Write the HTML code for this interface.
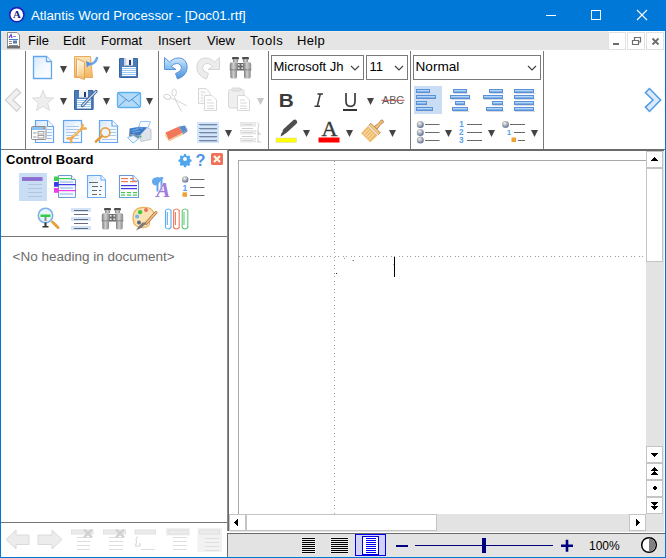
<!DOCTYPE html>
<html><head><meta charset="utf-8">
<style>
html,body{margin:0;padding:0}
body{width:666px;height:558px;overflow:hidden;position:relative;background:#fff;font-family:"Liberation Sans",sans-serif}
.a{position:absolute}
.t{position:absolute;white-space:pre;line-height:1}
</style></head><body>
<!-- title bar -->
<div class="a" style="left:0;top:0;width:666px;height:31px;background:#0078d7"></div>
<div class="a" style="left:0;top:0;width:1px;height:558px;background:#0078d7"></div>
<div class="a" style="left:665px;top:0;width:1px;height:558px;background:#0078d7"></div>
<div class="a" style="left:0;top:557px;width:666px;height:1px;background:#0078d7"></div>
<div class="t" style="left:31px;top:9px;font-size:13.25px;color:#fff">Atlantis Word Processor - [Doc01.rtf]</div>
<!-- menu bar -->
<div class="a" style="left:1px;top:31px;width:664px;height:19px;background:#e5e5e5"></div>
<div class="a" style="left:1px;top:31px;width:607px;height:1px;background:#f0eeec"></div>
<div class="a" style="left:608px;top:31px;width:57px;height:19px;background:#fff"></div>
<div class="a" style="left:608px;top:32px;width:16px;height:16px;border:1px solid #e2e2e2"></div>
<div class="a" style="left:627px;top:32px;width:16px;height:16px;border:1px solid #e2e2e2"></div>
<div class="a" style="left:646px;top:32px;width:16px;height:16px;border:1px solid #e2e2e2"></div>
<div class="t" style="left:28px;top:34px;font-size:13px;color:#000">File</div>
<div class="t" style="left:63px;top:34px;font-size:13px;color:#000">Edit</div>
<div class="t" style="left:101px;top:34px;font-size:13px;color:#000">Format</div>
<div class="t" style="left:158px;top:34px;font-size:13px;color:#000">Insert</div>
<div class="t" style="left:207px;top:34px;font-size:13px;color:#000">View</div>
<div class="t" style="left:250px;top:34px;font-size:13px;color:#000;letter-spacing:0.6px">Tools</div>
<div class="t" style="left:297px;top:34px;font-size:13px;color:#000;letter-spacing:0.3px">Help</div>
<!-- toolbar separators -->
<div class="a" style="left:25px;top:51px;width:1px;height:98px;background:#7a7a7a"></div>
<div class="a" style="left:158px;top:51px;width:1px;height:98px;background:#7a7a7a"></div>
<div class="a" style="left:268px;top:51px;width:1px;height:98px;background:#7a7a7a"></div>
<div class="a" style="left:410px;top:51px;width:1px;height:98px;background:#7a7a7a"></div>
<div class="a" style="left:543px;top:51px;width:1px;height:98px;background:#7a7a7a"></div>
<!-- combos -->
<div class="a" style="left:271px;top:55px;width:91px;height:23px;border:1px solid #7a7a7a;background:#fff"></div>
<div class="a" style="left:366px;top:55px;width:40px;height:23px;border:1px solid #7a7a7a;background:#fff"></div>
<div class="a" style="left:413px;top:55px;width:126px;height:23px;border:1px solid #7a7a7a;background:#fff"></div>
<div class="a" style="left:272px;top:56px;width:72px;height:23px;overflow:hidden"><div class="t" style="left:1.5px;top:4px;font-size:13px;color:#000">Microsoft JhengHei</div></div>
<div class="t" style="left:369.5px;top:60px;font-size:13px;color:#000">11</div>
<div class="t" style="left:415.5px;top:60px;font-size:13.6px;color:#000">Normal</div>
<!-- toolbar bottom line -->
<div class="a" style="left:1px;top:149px;width:664px;height:1px;background:#767676"></div>
<!-- left panel -->
<div class="t" style="left:6px;top:153px;font-size:13px;font-weight:bold;color:#000">Control Board</div>
<div class="a" style="left:1px;top:236px;width:226px;height:1px;background:#767676"></div>
<div class="t" style="left:12.5px;top:250px;font-size:13.5px;color:#6d6d6d">&lt;No heading in document&gt;</div>
<div class="a" style="left:1px;top:522px;width:226px;height:1px;background:#767676"></div>
<!-- doc frame -->
<div class="a" style="left:227px;top:149px;width:1px;height:382px;background:#8a8a8a"></div>
<div class="a" style="left:228px;top:150px;width:436px;height:1px;background:#6a6a6a"></div>
<div class="a" style="left:228px;top:149px;width:436px;height:1px;background:#6a6a6a"></div>
<div class="a" style="left:228px;top:149px;width:1px;height:382px;background:#6a6a6a"></div>
<!-- page -->
<div class="a" style="left:238px;top:160px;width:408px;height:1px;background:#a8a8a8"></div>
<div class="a" style="left:238px;top:160px;width:1px;height:354px;background:#a8a8a8"></div>
<!-- vertical scrollbar -->
<div class="a" style="left:646px;top:151px;width:18px;height:363px;background:#e3e3e3"></div>
<div class="a" style="left:646px;top:151px;width:15px;height:15px;border:1px solid #c4c4c4;background:#fff"></div>
<div class="a" style="left:646px;top:168px;width:15px;height:92px;border:1px solid #c4c4c4;background:#fff"></div>
<div class="a" style="left:646px;top:446px;width:15px;height:15px;border:1px solid #c4c4c4;background:#fff"></div>
<div class="a" style="left:646px;top:463px;width:15px;height:15px;border:1px solid #c4c4c4;background:#fff"></div>
<div class="a" style="left:646px;top:480px;width:15px;height:15px;border:1px solid #c4c4c4;background:#fff"></div>
<div class="a" style="left:646px;top:497px;width:15px;height:15px;border:1px solid #c4c4c4;background:#fff"></div>
<!-- horizontal scrollbar -->
<div class="a" style="left:229px;top:514px;width:435px;height:18px;background:#e3e3e3"></div>
<div class="a" style="left:229px;top:514px;width:15px;height:15px;border:1px solid #c4c4c4;background:#fff"></div>
<div class="a" style="left:246px;top:514px;width:189px;height:15px;border:1px solid #c4c4c4;background:#fff"></div>
<div class="a" style="left:629px;top:514px;width:15px;height:15px;border:1px solid #c4c4c4;background:#fff"></div>
<div class="a" style="left:227px;top:532px;width:438px;height:1px;background:#fff"></div>
<!-- status bar -->
<rect x="301" y="537" width="15" height="17" fill="#ececec"/><rect x="330" y="537" width="19" height="17" fill="#ececec"/>
<div class="a" style="left:227px;top:533px;width:438px;height:1px;background:#6a6a6a"></div>
<div class="a" style="left:227px;top:533px;width:1px;height:24px;background:#6a6a6a"></div>
<div class="a" style="left:228px;top:534px;width:437px;height:23px;background:#e3e3e3"></div>
<div class="t" style="left:589px;top:540px;font-size:12px;color:#000">100%</div>

<svg class="a" style="left:0;top:0" width="666" height="558" viewBox="0 0 666 558">
<defs>
<linearGradient id="gDoc" x1="0" y1="0" x2="1" y2="1"><stop offset="0" stop-color="#d6e7fa"/><stop offset="0.5" stop-color="#f2f8fe"/><stop offset="1" stop-color="#fff"/></linearGradient>
<linearGradient id="gBar" x1="0" y1="0" x2="0" y2="1"><stop offset="0" stop-color="#9cc4f0"/><stop offset="0.5" stop-color="#6fa2e2"/><stop offset="1" stop-color="#4f86d0"/></linearGradient>

</defs>
<!-- title icon -->
<circle cx="16.8" cy="14.7" r="7.1" fill="#fff" stroke="#1e22b8" stroke-width="1.6"/>
<text x="17" y="17.7" font-family="Liberation Serif" font-weight="bold" font-size="10.8" fill="#14247a" text-anchor="middle">A</text>
<!-- window controls -->
<rect x="546" y="15" width="10" height="1" fill="#fff"/>
<rect x="591.5" y="10.5" width="9" height="9" fill="none" stroke="#fff" stroke-width="1"/>
<path d="M637,10 L647,20 M647,10 L637,20" stroke="#fff" stroke-width="1.1"/>
<!-- menu doc icon -->
<path d="M7.5,32.5 H17 L19.5,35 V47.5 H7.5 Z" fill="#fff" stroke="#8c8c8c"/>
<rect x="7" y="46" width="13" height="2.5" fill="#707070"/>
<path d="M9,38 L11,34.5 L12,38" stroke="#5a4ad0" stroke-width="1.2" fill="none"/>
<rect x="13" y="36" width="3" height="1" fill="#9a7ad0"/>
<rect x="9" y="39" width="9" height="1" fill="#4a80c0"/>
<rect x="9" y="41" width="3" height="1" fill="#8a8a8a"/>
<rect x="9" y="43" width="3" height="1" fill="#8a8a8a"/>
<rect x="13" y="40.5" width="4" height="3" fill="#5a7ab0"/>
<rect x="9" y="45" width="9" height="1" fill="#8a8a8a"/>
<!-- mdi glyphs -->
<rect x="613" y="43" width="6" height="2" fill="#6d6d6d"/>
<path d="M632.5,40.5 h6 v4 h-6 z M634.5,40 v-2.5 h6 v4.5 h-2" fill="none" stroke="#6d6d6d" stroke-width="1.2"/>
<path d="M652.5,38.5 L658.5,44.5 M658.5,38.5 L652.5,44.5" stroke="#6d6d6d" stroke-width="1.8"/>
<!-- chevrons -->
<path d="M16.6,88.6 L20.6,92.8 L13,99.9 L20.6,107.1 L16.6,111.4 L5.4,99.9 Z" fill="#f0f0f0" stroke="#d2d2d2" stroke-width="1.3"/>
<path d="M649.5,88.6 L645.4,92.8 L653,100 L645.4,107.1 L649.5,111.4 L660.6,100 Z" fill="#dbeafb" stroke="#4d9be6" stroke-width="1.5"/>
<!-- dropdowns -->
<g fill="#444">
<path d="M60,66h7l-3.5,7z"/>
<path d="M103,66.5h7l-3.5,7z"/>
<path d="M60,98h7l-3.5,7z"/>
<path d="M103,98h7l-3.5,7z"/>
<path d="M146,98h7l-3.5,7z"/>
<path d="M225,130h7l-3.5,7z"/>
<path d="M367,98h7l-3.5,7z"/>
<path d="M303,130h7l-3.5,7z"/>
<path d="M346,130h7l-3.5,7z"/>
<path d="M389,130h7l-3.5,7z"/>
<path d="M445,130h7l-3.5,7z"/>
<path d="M488,130h7l-3.5,7z"/>
<path d="M531,130h7l-3.5,7z"/>
</g>
<path d="M257,98h7l-3.5,7z" fill="#c8c8c8"/>
<!-- combo chevrons -->
<path d="M351,66 l4,4 l4,-4 M395,66 l4,4 l4,-4 M528,66 l4,4 l4,-4" fill="none" stroke="#444" stroke-width="1.2"/>

<!-- G1 row1 -->
<path d="M33.5,56.5 H46.5 L51.5,61.5 V78.5 H33.5 Z" fill="url(#gDoc)" stroke="#64a6ee" stroke-width="1.3"/>
<path d="M46.5,56.5 V61.5 H51.5" fill="#fff" stroke="#64a6ee" stroke-width="1.3"/>
<defs>
<linearGradient id="gFold" x1="0" y1="0" x2="0" y2="1"><stop offset="0" stop-color="#fbe4b8"/><stop offset="1" stop-color="#f2b45e"/></linearGradient>
<linearGradient id="gDoor" x1="0" y1="0" x2="0" y2="1"><stop offset="0" stop-color="#fff8ea"/><stop offset="0.5" stop-color="#fbe0b0"/><stop offset="1" stop-color="#f3b868"/></linearGradient>
</defs>
<path d="M74.5,56.5 H90.5 L91.5,67 L92.5,77.5 H74.5 Z" fill="url(#gFold)" stroke="#ebaa5a" stroke-width="1"/>
<path d="M76.5,58.5 L84.5,62 V79.5 L76.5,76.5 Z" fill="url(#gDoor)" stroke="#e9a652" stroke-width="1"/>
<path d="M77.8,60.5 V75.5" stroke="#fffaf0" stroke-width="1"/>
<path d="M97.2,57 Q96,63.5 89.5,64.5" stroke="#6aa8ea" stroke-width="2.4" fill="none"/>
<path d="M86,61 L86.8,67.5 L91.5,63.5 Z" fill="#5494de"/>
<rect x="119" y="58" width="19" height="20" rx="1" fill="#4a7cbc"/>
<rect x="119.5" y="58.5" width="18" height="19" rx="1" fill="none" stroke="#3a64a0"/>
<rect x="124" y="58" width="9" height="7.5" fill="#f2f2f2"/>
<rect x="124" y="58" width="2" height="7.5" fill="#c8d4e4"/>
<rect x="129" y="60" width="2" height="5" fill="#26367a"/>
<rect x="122" y="67" width="14" height="9" fill="#fff"/>
<g fill="#9ccaf2"><rect x="122" y="68" width="14" height="1"/><rect x="122" y="70" width="14" height="1"/><rect x="122" y="72" width="14" height="1"/><rect x="122" y="74" width="14" height="1"/></g>
<!-- G1 row2 -->
<polygon points="43.0,90.2 45.8,97.6 53.7,98.0 47.6,103.0 49.6,110.6 43.0,106.3 36.4,110.6 38.4,103.0 32.3,98.0 40.2,97.6" fill="#eeeeee" stroke="#dcdcdc" stroke-width="1"/>
<rect x="74" y="90" width="19.5" height="20" rx="1" fill="#4a7cbc"/>
<rect x="74.5" y="90.5" width="18.5" height="19" rx="1" fill="none" stroke="#3a64a0"/>
<rect x="79" y="90" width="9" height="7.5" fill="#f2f2f2"/>
<rect x="84" y="92" width="2" height="5" fill="#26367a"/>
<rect x="77" y="99" width="14" height="9.5" fill="#fff"/>
<g fill="#9ccaf2"><rect x="77" y="100" width="14" height="1"/><rect x="77" y="102" width="14" height="1"/><rect x="77" y="104" width="14" height="1"/><rect x="77" y="106" width="14" height="1"/></g>
<path d="M82.5,105.5 L96,91.5" stroke="#3d5a8a" stroke-width="3.2" stroke-linecap="round"/>
<path d="M82.5,105.5 L96,91.5" stroke="#c8dcf0" stroke-width="1.4" stroke-linecap="round"/>
<rect x="117.5" y="92.5" width="23" height="15" rx="1.5" fill="#b2dbfa" stroke="#5ab0f0" stroke-width="1.3"/>
<path d="M118.5,93.5 L129,101.5 L139.5,93.5 M118.5,106.5 L126,99.5 M139.5,106.5 L132,99.5" stroke="#4d8fd6" stroke-width="1" fill="none"/>
<!-- G1 row3 -->
<path d="M35.5,120.5 H47.5 L53.5,126.5 V142.5 H35.5 Z" fill="url(#gDoc)" stroke="#64a6ee" stroke-width="1.2"/>
<path d="M47.5,120.5 V126.5 H53.5" fill="#fff" stroke="#64a6ee" stroke-width="1.2"/>
<g fill="#9cc4ec"><rect x="47" y="129" width="5" height="1"/><rect x="47" y="132" width="5" height="1"/><rect x="47" y="135" width="5" height="1"/><rect x="47" y="138" width="5" height="1"/></g>
<rect x="31.5" y="126.5" width="14.5" height="13" rx="1" fill="#fff" stroke="#8c8c8c"/>
<rect x="32" y="127" width="13.5" height="3" fill="#8cc2f2"/>
<rect x="43.5" y="127.5" width="1.5" height="1.5" fill="#e07050"/>
<rect x="38" y="131.5" width="6" height="2.5" fill="none" stroke="#8c8c8c" stroke-width="0.8"/>
<rect x="38" y="135.5" width="6" height="2.5" fill="none" stroke="#8c8c8c" stroke-width="0.8"/>
<rect x="33" y="132.5" width="3.5" height="1" fill="#9a9a9a"/><rect x="33" y="136.5" width="3.5" height="1" fill="#9a9a9a"/>
<rect x="63.5" y="120.5" width="18" height="22" fill="url(#gDoc)" stroke="#64a6ee" stroke-width="1.2"/>
<g fill="#a8c8ec"><rect x="66" y="126" width="13" height="1"/><rect x="66" y="129" width="13" height="1"/><rect x="66" y="132" width="13" height="1"/><rect x="66" y="135" width="13" height="1"/><rect x="66" y="138" width="13" height="1"/></g>
<g stroke="#eeab52" stroke-width="2.5" stroke-linecap="round" fill="none">
<path d="M71,138.5 L82,128.5"/>
<path d="M82,128.5 L82.5,124.8 M82,128.5 L85.7,128.6"/>
<path d="M71,138.5 L67.8,138.4 M71,138.5 L71.3,142"/>
</g>
<path d="M73,136 L80,130" stroke="#fbe0a8" stroke-width="0.8"/>
<path d="M99.5,120.5 H112 L117.5,126 V142.5 H99.5 Z" fill="url(#gDoc)" stroke="#64a6ee" stroke-width="1.2"/>
<path d="M112,120.5 V126 H117.5" fill="#fff" stroke="#64a6ee" stroke-width="1.2"/>
<g fill="#a8c8ec"><rect x="109" y="129" width="7" height="1"/><rect x="109" y="132" width="7" height="1"/><rect x="109" y="135" width="7" height="1"/><rect x="102" y="139" width="14" height="1"/></g>
<circle cx="105.3" cy="132.5" r="4.6" fill="#eef4fb" fill-opacity="0.7" stroke="#e8a040" stroke-width="1.6"/>
<path d="M102,136 L96,141.5" stroke="#e39a3a" stroke-width="2.6" stroke-linecap="round"/>
<path d="M140.5,121.5 H150.5 L148,127.5 H138.5 Z" fill="#f8fbff" stroke="#8cc4f4" stroke-width="0.9"/>
<path d="M147,127.5 L151,129.5 V139.5 L141,141.5 L139.5,135.5 Z" fill="#dfe4ec" stroke="#b4bcc8" stroke-width="0.8"/>
<path d="M129.5,128.5 L139,126.8 L147,127.5 L139.5,135.5 L130,134 Z" fill="#3d7bc8"/>
<path d="M131.5,130.5 L138,129 M132.5,132.5 L140,131 M136,128 L143,128" stroke="#7cb2ec" stroke-width="0.9"/>
<path d="M129,128.8 V136.5 L139.5,138.5 V135.5 L130,134 Z" fill="#7a8aa4"/>
<path d="M127.5,137.5 L133.5,135.5 L138.5,139 L133,143 Z" fill="#f2f8fe" stroke="#78b8f2" stroke-width="0.9"/>
<rect x="140" y="135.5" width="1.5" height="2" fill="#38c060"/>
<!-- G2 row1 -->
<defs>
<linearGradient id="gUndo" x1="0" y1="0" x2="0" y2="1"><stop offset="0" stop-color="#d4eafc"/><stop offset="0.45" stop-color="#8cc2f0"/><stop offset="1" stop-color="#4f8fd8"/></linearGradient>
<linearGradient id="gBino" x1="0" y1="0" x2="1" y2="0"><stop offset="0" stop-color="#7c7c7c"/><stop offset="0.45" stop-color="#cfcfcf"/><stop offset="1" stop-color="#8a8a8a"/></linearGradient>
</defs>
<path d="M164.5,57.5 L169.5,62 Q175,56.5 182,58.5 Q188,61.5 187,69 Q186,76 177.5,79 L175.5,73.5 Q181.5,71.5 181.5,68 Q181,63.5 176.5,63.5 Q173.5,63.5 171.5,66.5 L176,69.5 H164.5 Z" fill="url(#gUndo)" stroke="#5a94d8" stroke-width="1"/>
<path d="M 219.5 57.5 L 214.5 62 Q 209 56.5 202 58.5 Q 196 61.5 197 69 Q 198 76 206.5 79 L 208.5 73.5 Q 202.5 71.5 202.5 68 Q 203 63.5 207.5 63.5 Q 210.5 63.5 212.5 66.5 L 208 69.5 H 219.5 Z" fill="#ececec" stroke="#d6d6d6" stroke-width="1"/>
<g>
<rect x="232" y="57" width="7" height="2.4" rx="1" fill="#4e4e4e"/>
<rect x="233" y="59.3" width="5" height="3" fill="url(#gBino)"/>
<path d="M229.8,64 Q229.8,62.2 231.8,62.2 H235.8 Q237.6,62.2 237.6,64 V70 H229.8 Z" fill="url(#gBino)"/>
<rect x="229.8" y="69.6" width="7.8" height="1" fill="#5e5e5e"/>
<path d="M230.3,70.6 H237 V76.8 Q237,78.4 235.4,78.4 H231.9 Q230.3,78.4 230.3,76.8 Z" fill="url(#gBino)"/>
<rect x="242" y="57" width="7" height="2.4" rx="1" fill="#4e4e4e"/>
<rect x="243" y="59.3" width="5" height="3" fill="url(#gBino)"/>
<path d="M 251.2 64 Q 251.2 62.2 249.2 62.2 H 245.2 Q 243.4 62.2 243.4 64 V 70 H 251.2 Z" fill="url(#gBino)"/>
<rect x="243.4" y="69.6" width="7.8" height="1" fill="#5e5e5e"/>
<path d="M 250.7 70.6 H 244 V 76.8 Q 244 78.4 245.6 78.4 H 249.1 Q 250.7 78.4 250.7 76.8 Z" fill="url(#gBino)"/>
<rect x="237.3" y="63" width="6.4" height="7.5" fill="#6a6a6a"/>
<g fill="#e8e8e8"><rect x="238" y="64" width="1.6" height="1.6"/><rect x="241.4" y="64" width="1.6" height="1.6"/><rect x="238" y="67.4" width="1.6" height="1.6"/><rect x="241.4" y="67.4" width="1.6" height="1.6"/></g>
</g>
<!-- G2 row2 disabled -->
<g fill="none" stroke="#d6d6d6" stroke-width="1">
<ellipse cx="174.2" cy="92.6" rx="2.2" ry="3.6"/>
<ellipse cx="167.3" cy="96.8" rx="3.4" ry="2.3" transform="rotate(20 167.3 96.8)"/>
<path d="M174.5,96.5 L176,101 L181.5,111.5 M170.5,98 L176,100 L187,106"/>
</g>
<g stroke="#d8d8d8" stroke-width="1">
<path d="M198.5,88.5 H206 L210,92.5 V103.5 H198.5 Z" fill="#fafafa"/>
<path d="M204.5,95.5 H212 L216.5,100 V110.5 H204.5 Z" fill="#fff"/>
<path d="M201,92 h4 M201,95 h2 M201,98 h2 M201,101 h2 M207,100 h5 M207,103 h7 M207,106 h7 M207,108.5 h7" fill="none"/>
<rect x="228.5" y="89.5" width="15.5" height="18.5" rx="2" fill="#efefef"/>
<rect x="232" y="88" width="9" height="3" rx="1" fill="#e4e4e4"/>
<path d="M237.5,95.5 H245 L249.5,100 V110.5 H237.5 Z" fill="#fff"/>
<path d="M240,100 h5 M240,103 h7 M240,106 h7 M240,108.5 h7" fill="none"/>
</g>
<!-- G2 row3 -->
<path d="M165.5,132.5 L179,126.5 L182.5,133 L168.5,140 Z" fill="#f2775a"/>
<path d="M165.5,132.5 L168.5,140 L169,141.5 L165,135.5 Z" fill="#f4d49a"/>
<path d="M168.5,140 L182.5,133 L183,134.5 L169,141.5 Z" fill="#f0c890"/>
<path d="M179,126.5 L185,125.5 L187.5,130 L182.5,133 Z" fill="#5a8cd0"/>
<path d="M182.5,133 L187.5,130 L187.5,131.5 L183,134.5 Z" fill="#7a8aa8"/>
<rect x="197" y="122" width="22" height="21" fill="#d0e4fa"/>
<g fill="#7886a6"><rect x="199" y="124" width="18" height="1"/><rect x="199" y="128" width="18" height="1"/><rect x="199" y="132" width="18" height="1"/><rect x="199" y="136" width="18" height="1"/><rect x="199" y="140" width="18" height="1"/></g><g fill="#b4c4dc"><rect x="200" y="125" width="17" height="1"/><rect x="200" y="129" width="17" height="1"/><rect x="200" y="133" width="17" height="1"/><rect x="200" y="137" width="17" height="1"/><rect x="200" y="141" width="17" height="1"/></g>
<g fill="#efefef" stroke="#e2e2e2" stroke-width="0.8"><rect x="240.4" y="122.4" width="15" height="3.6"/><rect x="240.4" y="130.4" width="15" height="3.6"/><rect x="240.4" y="138.4" width="15" height="3.6"/></g>
<g fill="#cfcfcf"><rect x="242" y="124" width="11" height="0.8"/><rect x="242" y="128" width="11" height="1"/><rect x="242" y="132" width="11" height="0.8"/><rect x="242" y="136" width="11" height="1"/><rect x="242" y="140" width="11" height="0.8"/></g>
<path d="M257,122.5 Q260,124 258,128 V134 M257,130.5 Q260,132 258,136 V142 M257,134 h4 M257,142 h4" fill="none" stroke="#cfcfcf" stroke-width="1"/>

<!-- G3 -->
<text x="278.8" y="106.8" font-family="Liberation Sans" font-weight="bold" font-size="19" fill="#3c3c3c" textLength="15" lengthAdjust="spacingAndGlyphs">B</text>
<path d="M317.5,94 H323 M314.5,106.2 H320 M320.3,94 L317.3,106.2" fill="none" stroke="#3a3a3a" stroke-width="1.5"/>
<path d="M346,93 V101.5 Q346,106.3 350.5,106.3 Q355,106.3 355,101.5 V93" fill="none" stroke="#3c3c3c" stroke-width="1.7"/>
<rect x="343" y="109" width="14" height="2" fill="#333"/>
<text x="382" y="104" font-family="Liberation Sans" font-size="11" fill="#5a5a5a" textLength="22" lengthAdjust="spacingAndGlyphs">ABC</text>
<rect x="381.5" y="99.8" width="23" height="1" fill="#c0504a"/>
<rect x="276" y="138" width="20.5" height="4.5" fill="#ffff00" stroke="#d8d8c8" stroke-width="0.6"/>
<path d="M285,131 L294.8,122" stroke="#4e4e4e" stroke-width="4.8" stroke-linecap="round"/>
<path d="M280.5,136.5 L281.5,133 L283.5,131 L285.5,133 L283.5,135 Z" fill="#4e4e4e"/>
<text x="321.5" y="136" font-family="Liberation Serif" font-size="20" fill="#3a3a3a" stroke="#3a3a3a" stroke-width="0.35" textLength="16" lengthAdjust="spacingAndGlyphs">A</text>
<rect x="318.5" y="137.5" width="21" height="5" fill="#ff0000"/>
<g transform="translate(383,120.5) rotate(45)">
<path d="M-1.7,0.8 Q0,-0.8 1.7,0.8 L1.1,4.5 L2,10.5 H-2 L-1.1,4.5 Z" fill="#efbe76" stroke="#b07440" stroke-width="0.7"/>
<rect x="-6.7" y="10.5" width="13.4" height="3" fill="#f2c67e" stroke="#b07440" stroke-width="0.7"/>
<rect x="-6.7" y="13.4" width="13.4" height="1.1" fill="#e6ecf2"/>
<path d="M-6.7,14.5 H6.7 L6.4,24.5 H-6.4 Z" fill="#edb965"/>
<g fill="#f9dfae"><rect x="-4.5" y="15.5" width="1" height="8"/><rect x="-2" y="15.5" width="1" height="8"/><rect x="0.5" y="15.5" width="1" height="8"/><rect x="3" y="15.5" width="1" height="8"/></g>
</g>
<!-- G4 -->
<rect x="414" y="86" width="28" height="28" fill="#c9ddf5"/><rect x="417" y="93" width="14" height="1" fill="#d6dae2"/><rect x="416" y="89" width="14" height="4" fill="#5a90d8"/><rect x="417" y="90" width="12" height="1" fill="#b4d6f8"/><rect x="417" y="91" width="12" height="1" fill="#7eb0ea"/><rect x="417" y="99" width="20" height="1" fill="#d6dae2"/><rect x="416" y="95" width="20" height="4" fill="#5a90d8"/><rect x="417" y="96" width="18" height="1" fill="#b4d6f8"/><rect x="417" y="97" width="18" height="1" fill="#7eb0ea"/><rect x="417" y="105" width="11" height="1" fill="#d6dae2"/><rect x="416" y="101" width="11" height="4" fill="#5a90d8"/><rect x="417" y="102" width="9" height="1" fill="#b4d6f8"/><rect x="417" y="103" width="9" height="1" fill="#7eb0ea"/><rect x="417" y="111" width="17" height="1" fill="#d6dae2"/><rect x="416" y="107" width="17" height="4" fill="#5a90d8"/><rect x="417" y="108" width="15" height="1" fill="#b4d6f8"/><rect x="417" y="109" width="15" height="1" fill="#7eb0ea"/><rect x="454" y="93" width="14" height="1" fill="#d6dae2"/><rect x="453" y="89" width="14" height="4" fill="#5a90d8"/><rect x="454" y="90" width="12" height="1" fill="#b4d6f8"/><rect x="454" y="91" width="12" height="1" fill="#7eb0ea"/><rect x="451" y="99" width="20" height="1" fill="#d6dae2"/><rect x="450" y="95" width="20" height="4" fill="#5a90d8"/><rect x="451" y="96" width="18" height="1" fill="#b4d6f8"/><rect x="451" y="97" width="18" height="1" fill="#7eb0ea"/><rect x="456" y="105" width="10" height="1" fill="#d6dae2"/><rect x="455" y="101" width="10" height="4" fill="#5a90d8"/><rect x="456" y="102" width="8" height="1" fill="#b4d6f8"/><rect x="456" y="103" width="8" height="1" fill="#7eb0ea"/><rect x="453" y="111" width="16" height="1" fill="#d6dae2"/><rect x="452" y="107" width="16" height="4" fill="#5a90d8"/><rect x="453" y="108" width="14" height="1" fill="#b4d6f8"/><rect x="453" y="109" width="14" height="1" fill="#7eb0ea"/><rect x="490" y="93" width="14" height="1" fill="#d6dae2"/><rect x="489" y="89" width="14" height="4" fill="#5a90d8"/><rect x="490" y="90" width="12" height="1" fill="#b4d6f8"/><rect x="490" y="91" width="12" height="1" fill="#7eb0ea"/><rect x="484" y="99" width="20" height="1" fill="#d6dae2"/><rect x="483" y="95" width="20" height="4" fill="#5a90d8"/><rect x="484" y="96" width="18" height="1" fill="#b4d6f8"/><rect x="484" y="97" width="18" height="1" fill="#7eb0ea"/><rect x="493" y="105" width="11" height="1" fill="#d6dae2"/><rect x="492" y="101" width="11" height="4" fill="#5a90d8"/><rect x="493" y="102" width="9" height="1" fill="#b4d6f8"/><rect x="493" y="103" width="9" height="1" fill="#7eb0ea"/><rect x="487" y="111" width="17" height="1" fill="#d6dae2"/><rect x="486" y="107" width="17" height="4" fill="#5a90d8"/><rect x="487" y="108" width="15" height="1" fill="#b4d6f8"/><rect x="487" y="109" width="15" height="1" fill="#7eb0ea"/><rect x="515" y="93" width="20" height="1" fill="#d6dae2"/><rect x="514" y="89" width="20" height="4" fill="#5a90d8"/><rect x="515" y="90" width="18" height="1" fill="#b4d6f8"/><rect x="515" y="91" width="18" height="1" fill="#7eb0ea"/><rect x="515" y="99" width="20" height="1" fill="#d6dae2"/><rect x="514" y="95" width="20" height="4" fill="#5a90d8"/><rect x="515" y="96" width="18" height="1" fill="#b4d6f8"/><rect x="515" y="97" width="18" height="1" fill="#7eb0ea"/><rect x="515" y="105" width="20" height="1" fill="#d6dae2"/><rect x="514" y="101" width="20" height="4" fill="#5a90d8"/><rect x="515" y="102" width="18" height="1" fill="#b4d6f8"/><rect x="515" y="103" width="18" height="1" fill="#7eb0ea"/><rect x="515" y="111" width="20" height="1" fill="#d6dae2"/><rect x="514" y="107" width="20" height="4" fill="#5a90d8"/><rect x="515" y="108" width="18" height="1" fill="#b4d6f8"/><rect x="515" y="109" width="18" height="1" fill="#7eb0ea"/>
<defs><radialGradient id="gBall" cx="0.4" cy="0.35" r="0.7"><stop offset="0" stop-color="#f6f6f6"/><stop offset="0.55" stop-color="#a4a6ac"/><stop offset="1" stop-color="#4a6a9a"/></radialGradient></defs>
<g fill="url(#gBall)"><circle cx="420.3" cy="124.5" r="3.5"/><circle cx="420.3" cy="132.4" r="3.5"/><circle cx="420.3" cy="140.1" r="3.5"/></g>
<g fill="#6a6a6a"><rect x="425" y="124" width="14.5" height="1"/><rect x="425" y="132" width="14.5" height="1"/><rect x="425" y="140" width="14.5" height="1"/></g>
<g font-family="Liberation Sans" font-size="8.2" font-weight="bold" fill="#5aa2ea"><text x="459.3" y="127">1</text><text x="459" y="135">2</text><text x="459" y="143">3</text></g>
<g fill="#6a6a6a"><rect x="467" y="124" width="15" height="1"/><rect x="467" y="132" width="15" height="1"/><rect x="467" y="140" width="15" height="1"/></g>
<circle cx="505.5" cy="124.4" r="3.4" fill="url(#gBall)"/>
<text x="506.8" y="135" font-family="Liberation Sans" font-size="8" font-weight="bold" fill="#5aa2ea">1</text>
<rect x="511.5" y="137.5" width="4.5" height="4.5" fill="#f0a030"/>
<g fill="#6a6a6a"><rect x="510" y="124" width="15" height="1"/><rect x="514" y="132" width="11" height="1"/><rect x="518" y="140" width="7" height="1"/></g>

<!-- control board header icons -->
<g transform="translate(185,159) scale(0.82)">
<path d="M-1.2,-6 h2.4 l0.4,1.8 l1.6,0.7 l1.6,-1 l1.7,1.7 l-1,1.6 l0.7,1.6 l1.8,0.4 v2.4 l-1.8,0.4 l-0.7,1.6 l1,1.6 l-1.7,1.7 l-1.6,-1 l-1.6,0.7 l-0.4,1.8 h-2.4 l-0.4,-1.8 l-1.6,-0.7 l-1.6,1 l-1.7,-1.7 l1,-1.6 l-0.7,-1.6 l-1.8,-0.4 v-2.4 l1.8,-0.4 l0.7,-1.6 l-1,-1.6 l1.7,-1.7 l1.6,1 l1.6,-0.7 z" fill="#4da6ee"/>
<circle cx="0" cy="0" r="2.4" fill="#fff"/>
</g>
<text x="195.5" y="165.5" font-family="Liberation Sans" font-weight="bold" font-size="16" fill="#4d94e4" textLength="10" lengthAdjust="spacingAndGlyphs">?</text>
<rect x="211" y="153" width="12" height="12" rx="1.5" fill="#f0705a"/>
<path d="M214,156 L220,162 M220,156 L214,162" stroke="#fff8e0" stroke-width="2.2"/>
<!-- CB row1 -->
<rect x="19" y="173" width="28" height="28" fill="#c9ddf5"/>
<rect x="22" y="177" width="20.5" height="4" fill="#9a72d0"/>
<rect x="22" y="178.5" width="20.5" height="1" fill="#5a6ad8" opacity="0.6"/>
<g fill="#b4c4dc"><rect x="28" y="184" width="14" height="1"/><rect x="28" y="188" width="14" height="1"/><rect x="28" y="192" width="14" height="1"/><rect x="28" y="196" width="14" height="1"/></g>
<path d="M58.5,175.5 H71.5 L75.5,179.5 V197.5 H58.5 Z" fill="#f2f8fe" stroke="#6a9ad8" stroke-width="1"/>
<path d="M71.5,175.5 V179.5 H75.5" fill="#fff" stroke="#6a9ad8" stroke-width="1"/>
<rect x="54" y="176.5" width="4.5" height="4.5" fill="#40d050"/><rect x="58" y="178" width="14" height="1.2" fill="#40d050"/>
<rect x="54" y="182" width="4.5" height="4.8" fill="#3a3ae8"/><rect x="58" y="184" width="18" height="1.2" fill="#3a3ae8"/>
<rect x="54" y="188" width="4.5" height="4.8" fill="#f040e0"/><rect x="58" y="190" width="18" height="1.2" fill="#f040e0"/>
<g fill="#8ab0dc"><rect x="60" y="181.5" width="13" height="1"/><rect x="60" y="187.5" width="13" height="1"/><rect x="60" y="193.5" width="13" height="1"/></g>
<path d="M87.5,175.5 H101 L105.5,180 V197.5 H87.5 Z" fill="url(#gDoc)" stroke="#6aaaf0" stroke-width="1.1"/>
<path d="M101,175.5 V180 H105.5" fill="#fff" stroke="#6aaaf0" stroke-width="1.1"/>
<g fill="#6a6a6a"><rect x="89" y="182" width="9" height="1"/><rect x="92" y="186" width="6" height="1"/><rect x="100" y="186" width="2" height="1"/><rect x="92" y="190" width="5" height="1"/><rect x="99" y="190" width="2" height="1"/><rect x="92" y="194" width="5" height="1"/><rect x="99" y="194" width="2" height="1"/></g>
<path d="M119.5,175.5 H133 L138.5,181 V197.5 H119.5 Z" fill="#fff" stroke="#6a9ad8" stroke-width="1.1"/>
<path d="M133,175.5 V181 H138.5" fill="#fff" stroke="#6a9ad8" stroke-width="1.1"/>
<g fill="#f07a5a"><rect x="121" y="178" width="7" height="1.2"/><rect x="130" y="178" width="4" height="1.2"/><rect x="121" y="181" width="7" height="1.2"/><rect x="130" y="181" width="7" height="1.2"/></g>
<g fill="#3a3ae0"><rect x="121" y="185" width="16" height="1.2"/><rect x="121" y="188" width="16" height="1.2"/></g>
<g fill="#40c850"><rect x="121" y="192" width="4" height="1.2"/><rect x="127" y="192" width="4" height="1.2"/><rect x="133" y="192" width="4" height="1.2"/><rect x="121" y="194.5" width="4" height="1.2"/><rect x="127" y="194.5" width="4" height="1.2"/><rect x="133" y="194.5" width="4" height="1.2"/></g>
<path d="M164,177.5 H156.5 Q152,177.5 152,181.5 Q152,185.5 156.5,185.5 Z" fill="#64a8ec"/>
<rect x="156.5" y="177" width="2" height="14.5" fill="#64a8ec"/>
<rect x="160.5" y="177" width="2" height="14.5" fill="#64a8ec"/>
<text x="156.3" y="196.5" font-family="Liberation Serif" font-style="italic" font-weight="bold" font-size="21" fill="#a27cda" stroke="#fff" stroke-width="0.6" paint-order="stroke">A</text>
<circle cx="185.2" cy="179.4" r="3.2" fill="url(#gBall)"/>
<text x="182.6" y="190.6" font-family="Liberation Sans" font-size="8.5" font-weight="bold" fill="#5aa2ea">1</text>
<rect x="182.5" y="192.3" width="4.5" height="4.5" fill="#f0a030"/>
<g fill="#6a6a6a"><rect x="190" y="179" width="14.5" height="1"/><rect x="190" y="187" width="14.5" height="1"/><rect x="190" y="195" width="14.5" height="1"/></g>
<!-- CB row2 -->
<circle cx="45.5" cy="215.5" r="7.2" fill="#eaf4fd" stroke="#7ab2ea" stroke-width="1.6"/>
<rect x="40.5" y="214.5" width="10" height="2.5" fill="#30d040"/>
<rect x="44.5" y="217" width="2" height="4" fill="#8a8a8a"/>
<rect x="44.5" y="222.5" width="2" height="4" fill="#333"/>
<rect x="42.5" y="226" width="6" height="1.5" fill="#333"/>
<path d="M52.5,222 L58,227.5" stroke="#e8a040" stroke-width="3" stroke-linecap="round"/>
<g fill="#d2e4f8"><rect x="71" y="208" width="20" height="4"/><rect x="71" y="217" width="20" height="4"/><rect x="71" y="226" width="20" height="4"/></g>
<g fill="#6a6a7a"><rect x="74" y="210" width="14" height="1"/><rect x="74" y="214" width="14" height="1"/><rect x="74" y="219" width="14" height="1"/><rect x="74" y="223" width="14" height="1"/><rect x="74" y="228" width="14" height="1"/></g>
<g transform="translate(-128,151)"><g>
<rect x="232" y="57" width="7" height="2.4" rx="1" fill="#4e4e4e"/>
<rect x="233" y="59.3" width="5" height="3" fill="url(#gBino)"/>
<path d="M229.8,64 Q229.8,62.2 231.8,62.2 H235.8 Q237.6,62.2 237.6,64 V70 H229.8 Z" fill="url(#gBino)"/>
<rect x="229.8" y="69.6" width="7.8" height="1" fill="#5e5e5e"/>
<path d="M230.3,70.6 H237 V76.8 Q237,78.4 235.4,78.4 H231.9 Q230.3,78.4 230.3,76.8 Z" fill="url(#gBino)"/>
<rect x="242" y="57" width="7" height="2.4" rx="1" fill="#4e4e4e"/>
<rect x="243" y="59.3" width="5" height="3" fill="url(#gBino)"/>
<path d="M 251.2 64 Q 251.2 62.2 249.2 62.2 H 245.2 Q 243.4 62.2 243.4 64 V 70 H 251.2 Z" fill="url(#gBino)"/>
<rect x="243.4" y="69.6" width="7.8" height="1" fill="#5e5e5e"/>
<path d="M 250.7 70.6 H 244 V 76.8 Q 244 78.4 245.6 78.4 H 249.1 Q 250.7 78.4 250.7 76.8 Z" fill="url(#gBino)"/>
<rect x="237.3" y="63" width="6.4" height="7.5" fill="#6a6a6a"/>
<g fill="#e8e8e8"><rect x="238" y="64" width="1.6" height="1.6"/><rect x="241.4" y="64" width="1.6" height="1.6"/><rect x="238" y="67.4" width="1.6" height="1.6"/><rect x="241.4" y="67.4" width="1.6" height="1.6"/></g>
</g></g>
<path d="M143.5,207.3 Q152,207 153.8,213 Q154,216 151.5,217 Q148.5,218 149.5,222 Q150.5,227 143,227.5 Q133,228 133,218 Q133,207.5 143.5,207.3 Z" fill="#f9e2b4" stroke="#eeb25e" stroke-width="1.3"/>
<circle cx="140.1" cy="212.1" r="2.2" fill="#38c838"/>
<circle cx="146" cy="210" r="2" fill="#f07060"/>
<circle cx="137.1" cy="216.6" r="2" fill="#70b4f0"/>
<circle cx="139" cy="222.5" r="2" fill="#606878"/>
<path d="M156,212.5 L146,223.5" stroke="#a86a40" stroke-width="3" stroke-linecap="round"/>
<path d="M156,212.5 L146,223.5" stroke="#f0c078" stroke-width="1.8" stroke-linecap="round"/>
<path d="M147,222.5 L144.5,225 Q141,229 136,230.5 Q138,226.5 142.5,222.5 Z" fill="#7a7a7a"/>
<g fill="none" stroke-width="1.1">
<path d="M165.5,210.5 Q168.2,207.5 171,210.5 V227.5 Q168.2,230.5 165.5,227.5 Z M167.3,212 V225" stroke="#5ab0f0"/>
<path d="M173.6,210.5 Q176.4,207.5 179.2,210.5 V227.5 Q176.4,230.5 173.6,227.5 Z M175.4,212 V225" stroke="#f07a5a"/>
<path d="M182.2,210.5 Q185,207.5 187.8,210.5 V227.5 Q185,230.5 182.2,227.5 Z M184,212 V225" stroke="#60c878"/>
</g>
<!-- bottom panel disabled icons -->
<path d="M6,539.5 L16,530 V535 H29 V544.5 H16 V549 Z" fill="#ececec" stroke="#dadada" stroke-width="1"/>
<path d="M62,539.5 L52,530 V535 H38 V544.5 H52 V549 Z" fill="#ececec" stroke="#dadada" stroke-width="1"/>
<g fill="#ececec" stroke="#dcdcdc" stroke-width="0.8">
<rect x="71.5" y="530" width="21.5" height="4"/>
<rect x="103.5" y="530" width="22" height="4"/>
<rect x="135" y="530" width="20.5" height="4"/>
<rect x="166" y="528" width="24" height="7.5" stroke="none" fill="#f0f0f0"/>
<rect x="168" y="530" width="20" height="4"/>
<rect x="197.5" y="528" width="24.5" height="24" stroke="none" fill="#f2f2f2"/>
<rect x="199.5" y="530" width="20" height="4"/>
</g>
<path d="M84,529.5 L92,537.5 M92,529.5 L84,537.5 M116,529.5 L124,537.5 M124,529.5 L116,537.5" stroke="#cfcfcf" stroke-width="2.4"/>
<g fill="#dedede">
<rect x="77" y="537" width="13" height="1"/><rect x="77" y="541" width="13" height="1"/><rect x="77" y="545" width="13" height="1"/><rect x="77" y="549" width="13" height="1"/>
<rect x="109" y="537" width="14" height="1"/><rect x="109" y="541" width="14" height="1"/><rect x="109" y="545" width="14" height="1"/><rect x="109" y="549" width="14" height="1"/>
<rect x="141" y="549" width="14" height="1"/>
<rect x="173" y="537" width="13.5" height="1"/><rect x="173" y="541" width="13.5" height="1"/><rect x="173" y="545" width="13.5" height="1"/><rect x="173" y="549" width="13.5" height="1"/>
<rect x="205" y="538" width="14" height="1"/><rect x="205" y="542" width="14" height="1"/><rect x="205" y="546" width="14" height="1"/><rect x="205" y="550" width="14" height="1"/>
</g>
<path d="M137.5,536.5 Q135,539 136.5,542 L135.5,546 H140 V543" fill="none" stroke="#d4d4d4" stroke-width="1"/>
<!-- scrollbar glyphs -->
<g fill="#000"><rect x="654" y="157" width="1" height="1"/><rect x="653" y="158" width="3" height="1"/><rect x="652" y="159" width="5" height="1"/><rect x="651" y="160" width="7" height="1"/><rect x="651" y="453" width="7" height="1"/><rect x="652" y="454" width="5" height="1"/><rect x="653" y="455" width="3" height="1"/><rect x="654" y="456" width="1" height="1"/><rect x="654" y="467" width="1" height="1"/><rect x="653" y="468" width="3" height="1"/><rect x="652" y="469" width="5" height="1"/><rect x="651" y="470" width="7" height="1"/><rect x="654" y="471" width="1" height="1"/><rect x="653" y="472" width="3" height="1"/><rect x="652" y="473" width="5" height="1"/><rect x="651" y="474" width="7" height="1"/><rect x="651" y="502" width="7" height="1"/><rect x="652" y="503" width="5" height="1"/><rect x="653" y="504" width="3" height="1"/><rect x="654" y="505" width="1" height="1"/><rect x="651" y="506" width="7" height="1"/><rect x="652" y="507" width="5" height="1"/><rect x="653" y="508" width="3" height="1"/><rect x="654" y="509" width="1" height="1"/><rect x="654" y="486" width="2" height="4"/><rect x="653" y="487" width="4" height="2"/><rect x="234" y="522" width="1" height="1"/><rect x="235" y="521" width="1" height="3"/><rect x="236" y="520" width="1" height="5"/><rect x="237" y="519" width="1" height="7"/><rect x="636" y="519" width="1" height="7"/><rect x="637" y="520" width="1" height="5"/><rect x="638" y="521" width="1" height="3"/><rect x="639" y="522" width="1" height="1"/></g>
<!-- status bar -->
<rect x="301" y="537" width="15" height="17" fill="#ececec"/><rect x="330" y="537" width="19" height="17" fill="#ececec"/>
<g fill="#000">
<rect x="302" y="538" width="13" height="1"/><rect x="302" y="540" width="13" height="1"/><rect x="302" y="542" width="13" height="1"/><rect x="302" y="544" width="13" height="1"/><rect x="302" y="546" width="13" height="1"/><rect x="302" y="548" width="13" height="1"/><rect x="302" y="550" width="13" height="1"/><rect x="302" y="552" width="13" height="1"/><rect x="331" y="538" width="17" height="1"/><rect x="331" y="540" width="17" height="1"/><rect x="331" y="542" width="17" height="1"/><rect x="331" y="544" width="17" height="1"/><rect x="331" y="546" width="17" height="1"/><rect x="331" y="548" width="17" height="1"/><rect x="331" y="550" width="17" height="1"/><rect x="331" y="552" width="17" height="1"/>
</g>
<rect x="355" y="534" width="31" height="22" fill="#0000f0"/><rect x="356" y="535" width="29" height="20" fill="#d2d2fa"/><rect x="362" y="536" width="17" height="19" fill="#0000d8"/><rect x="363" y="537" width="15" height="17" fill="#fff"/><g fill="#0000f0"><rect x="366" y="538" width="10" height="1"/><rect x="366" y="540" width="10" height="1"/><rect x="366" y="542" width="10" height="1"/><rect x="366" y="544" width="10" height="1"/><rect x="366" y="546" width="10" height="1"/><rect x="366" y="548" width="10" height="1"/><rect x="366" y="550" width="10" height="1"/><rect x="366" y="552" width="10" height="1"/></g>
<rect x="396" y="545" width="12" height="2" fill="#000080"/>
<rect x="415" y="545" width="138" height="1" fill="#000080"/>
<rect x="482" y="538" width="4" height="15" fill="#000080"/>
<path d="M561,545.8 H573 M567,539.7 V551.8" stroke="#000080" stroke-width="2.6"/>
<circle cx="649" cy="545" r="7.3" fill="#fff" stroke="#000" stroke-width="1.5"/>
<path d="M649,538.5 A6.5,6.5 0 0 1 649,551.5 Z" fill="#808080"/>
<!-- doc guides -->
<path d="M239,256h1M242,256h1M247,256h1M250,256h1M255,256h1M258,256h1M263,256h1M266,256h1M271,256h1M274,256h1M279,256h1M282,256h1M287,256h1M290,256h1M295,256h1M298,256h1M303,256h1M306,256h1M311,256h1M314,256h1M319,256h1M322,256h1M327,256h1M330,256h1M335,256h1M338,256h1M343,256h1M346,256h1M351,256h1M354,256h1M359,256h1M362,256h1M367,256h1M370,256h1M375,256h1M378,256h1M383,256h1M386,256h1M391,256h1M394,256h1M399,256h1M402,256h1M407,256h1M410,256h1M415,256h1M418,256h1M423,256h1M426,256h1M431,256h1M434,256h1M439,256h1M442,256h1M447,256h1M450,256h1M455,256h1M458,256h1M463,256h1M466,256h1M471,256h1M474,256h1M479,256h1M482,256h1M487,256h1M490,256h1M495,256h1M498,256h1M503,256h1M506,256h1M511,256h1M514,256h1M519,256h1M522,256h1M527,256h1M530,256h1M535,256h1M538,256h1M543,256h1M546,256h1M551,256h1M554,256h1M559,256h1M562,256h1M567,256h1M570,256h1M575,256h1M578,256h1M583,256h1M586,256h1M591,256h1M594,256h1M599,256h1M602,256h1M607,256h1M610,256h1M615,256h1M618,256h1M623,256h1M626,256h1M631,256h1M634,256h1M639,256h1M642,256h1" stroke="#a0a0a0" stroke-width="1" transform="translate(0,0.5)"/><path d="M334,161v1M334,164v1M334,169v1M334,172v1M334,177v1M334,180v1M334,185v1M334,188v1M334,193v1M334,196v1M334,201v1M334,204v1M334,209v1M334,212v1M334,217v1M334,220v1M334,225v1M334,228v1M334,233v1M334,236v1M334,241v1M334,244v1M334,249v1M334,252v1M334,257v1M334,260v1M334,265v1M334,268v1M334,273v1M334,276v1M334,281v1M334,284v1M334,289v1M334,292v1M334,297v1M334,300v1M334,305v1M334,308v1M334,313v1M334,316v1M334,321v1M334,324v1M334,329v1M334,332v1M334,337v1M334,340v1M334,345v1M334,348v1M334,353v1M334,356v1M334,361v1M334,364v1M334,369v1M334,372v1M334,377v1M334,380v1M334,385v1M334,388v1M334,393v1M334,396v1M334,401v1M334,404v1M334,409v1M334,412v1M334,417v1M334,420v1M334,425v1M334,428v1M334,433v1M334,436v1M334,441v1M334,444v1M334,449v1M334,452v1M334,457v1M334,460v1M334,465v1M334,468v1M334,473v1M334,476v1M334,481v1M334,484v1M334,489v1M334,492v1M334,497v1M334,500v1M334,505v1M334,508v1M334,513v1" stroke="#a0a0a0" stroke-width="1" transform="translate(0.5,0)"/>
<rect x="394" y="257" width="1" height="20" fill="#000"/>
<rect x="353" y="260" width="1" height="1" fill="#3a90f0"/><rect x="352" y="260" width="1" height="1" fill="#f0c090"/><rect x="336" y="273" width="1" height="1" fill="#6a1010"/><rect x="344" y="258" width="1" height="1" fill="#a0a0a0"/><rect x="393" y="264" width="1" height="1" fill="#80c0f0"/>
<!--ICONS5-->




</svg>
</body></html>
